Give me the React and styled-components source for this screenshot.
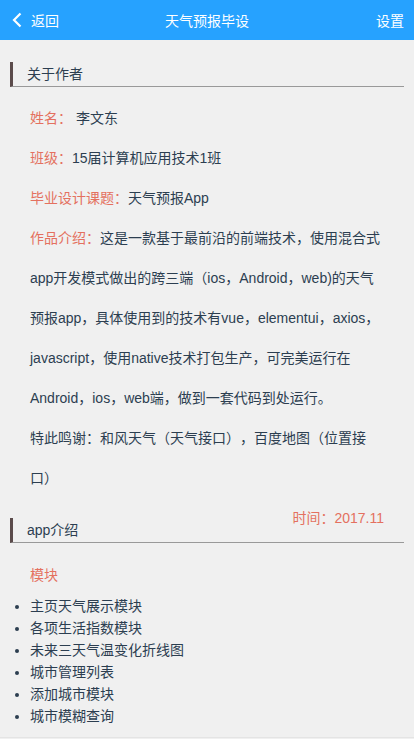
import React from "react";
import styled, { createGlobalStyle } from "styled-components";

const Global = createGlobalStyle`
  html, body { margin: 0; padding: 0; background: #f0f0f0; }
  body {
    font-family: "Liberation Sans", "Noto Sans CJK SC", sans-serif;
    font-size: 14px;
    color: #2c3e50;
    text-spacing-trim: space-all;
  }
`;

const Page = styled.div`
  background: #f0f0f0;
  padding-bottom: 10px;
  border-bottom: 1px solid #e4e4e4;
`;

const Header = styled.header`
  height: 40px;
  background: #26a2ff;
  color: #fff;
  display: grid;
  grid-template-columns: 1fr auto 1fr;
  align-items: center;
  padding: 0 10px;
  font-size: 14px;
`;

const Side = styled.div`
  display: flex;
  align-items: center;
  gap: 8px;
  justify-content: ${(p) => (p.$right ? "flex-end" : "flex-start")};
`;

const Back = styled.svg`
  width: 12px;
  height: 16px;
  margin-left: 1px;
`;

const Title = styled.div`
  text-align: center;
`;

const SectionTitle = styled.h2`
  margin: ${(p) => (p.$first ? "22px" : "20px")} 10px 0;
  height: 25px;
  line-height: 25px;
  border-left: 3px solid #5b4b4b;
  border-bottom: 1px solid #999;
  padding-left: 14px;
  font-size: 14px;
  font-weight: normal;
  color: #2c3e50;
  box-sizing: border-box;
`;

const Info = styled.div`
  margin-top: 11px;
  padding: 0 30px;
  line-height: 40px;
`;

const Line = styled.p`
  margin: 0;
`;

const Label = styled.span`
  color: #e4705f;
`;

const Time = styled.div`
  float: right;
  line-height: 40px;
  padding-right: 30px;
  color: #e4705f;
`;

const Sub = styled.div`
  margin-top: 12px;
  padding: 0 30px;
  line-height: 40px;
  color: #e4705f;
`;

const List = styled.ul`
  margin: 0;
  padding-left: 30px;
  line-height: 22px;
`;

export default function App() {
  const modules = [
    "主页天气展示模块",
    "各项生活指数模块",
    "未来三天气温变化折线图",
    "城市管理列表",
    "添加城市模块",
    "城市模糊查询",
  ];
  return (
    <>
      <Global />
      <Page>
        <Header>
          <Side>
            <Back viewBox="0 0 12 16">
              <path d="M9.5 1.5 L3 8 L9.5 14.5" fill="none" stroke="#fff" strokeWidth="2.2" />
            </Back>
            <span>返回</span>
          </Side>
          <Title>天气预报毕设</Title>
          <Side $right>设置</Side>
        </Header>

        <SectionTitle $first>关于作者</SectionTitle>
        <Info>
          <Line>
            <Label>姓名：</Label> 李文东
          </Line>
          <Line>
            <Label>班级：</Label>15届计算机应用技术1班
          </Line>
          <Line>
            <Label>毕业设计课题：</Label>天气预报App
          </Line>
          <Line>
            <Label>作品介绍：</Label>
            这是一款基于最前沿的前端技术，使用混合式app开发模式做出的跨三端（ios，Android，web)的天气预报app，具体使用到的技术有vue，elementui，axios，javascript，使用native技术打包生产，可完美运行在Android，ios，web端，做到一套代码到处运行。
          </Line>
          <Line>特此鸣谢：和风天气（天气接口），百度地图（位置接口）</Line>
        </Info>
        <Time>时间：2017.11</Time>

        <SectionTitle>app介绍</SectionTitle>
        <Sub>模块</Sub>
        <List>
          {modules.map((m) => (
            <li key={m}>{m}</li>
          ))}
        </List>
      </Page>
    </>
  );
}
